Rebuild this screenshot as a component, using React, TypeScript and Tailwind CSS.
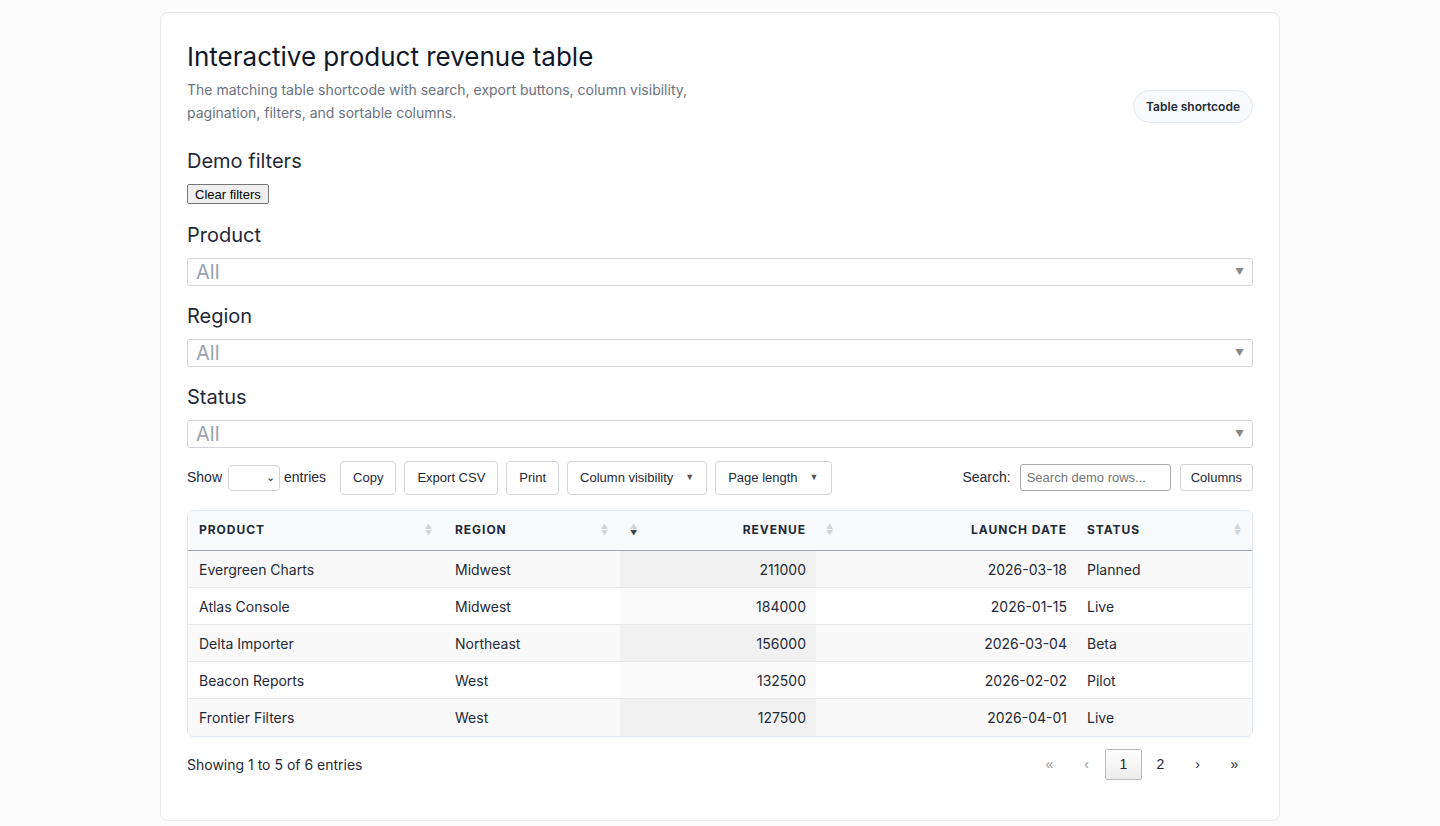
import React from "react";

const rows = [
  ["Evergreen Charts", "Midwest", "211000", "2026-03-18", "Planned"],
  ["Atlas Console", "Midwest", "184000", "2026-01-15", "Live"],
  ["Delta Importer", "Northeast", "156000", "2026-03-04", "Beta"],
  ["Beacon Reports", "West", "132500", "2026-02-02", "Pilot"],
  ["Frontier Filters", "West", "127500", "2026-04-01", "Live"],
];

const Sort = ({ active }: { active?: boolean }) => (
  <span className="flex flex-col text-[7px] leading-[7px]">
    <span className="text-[#d0d4da]">▲</span>
    <span className={active ? "text-[#3a4250]" : "text-[#d0d4da]"}>▼</span>
  </span>
);

const Filter = ({ label }: { label: string }) => (
  <div>
    <div className="text-[20px] text-[#1f2937] mt-[17px] mb-[10px] leading-[26px]">{label}</div>
    <div className="h-[28px] border border-[#d1d5db] rounded-[3px] flex items-center justify-between px-2">
      <span className="text-[20px] text-[#9ca3af]">All</span>
      <span className="text-[9px] text-[#888]">▼</span>
    </div>
  </div>
);

const Btn = ({ children }: { children: React.ReactNode }) => (
  <button className="h-[34px] px-3 border border-[#d1d5db] rounded-[4px] bg-white text-[13px] text-[#1f2937] flex items-center gap-3" style={{ fontFamily: "'Liberation Sans', sans-serif" }}>
    {children}
  </button>
);

export default function App() {
  return (
    <div className="min-h-screen bg-[#fcfcfd] pt-3 pb-3" style={{ fontFamily: "Inter, 'Liberation Sans', sans-serif" }}>
      <div className="w-[1120px] mx-auto bg-white border border-[#e5e7eb] rounded-[8px] px-[26px] pt-[28px] pb-[40px] text-[#1f2937]">
        <div className="flex items-start justify-between">
          <div>
            <h1 className="text-[26px] leading-[32px] text-[#111827]">Interactive product revenue table</h1>
            <p className="text-[14px] leading-[23px] text-[#6b7280] mt-[5px] w-[520px]">
              The matching table shortcode with search, export buttons, column visibility, pagination, filters, and sortable columns.
            </p>
          </div>
          <div className="mt-[49px] h-[33px] px-3 rounded-full border border-[#e2e8f0] bg-[#f8fafc] text-[12px] font-semibold flex items-center text-[#1f2937]">Table shortcode</div>
        </div>
        <div className="text-[20px] mt-[24px] leading-[26px]">Demo filters</div>
        <button className="mt-[10px] h-[20px] px-[7px] border border-[#767676] rounded-[2px] bg-[#efefef] text-[13px] text-black leading-none" style={{ fontFamily: "'Liberation Sans', sans-serif" }}>Clear filters</button>
        <Filter label="Product" />
        <Filter label="Region" />
        <Filter label="Status" />
        <div className="flex items-center justify-between mt-[13px] text-[14px]" style={{ fontFamily: "'Liberation Sans', sans-serif" }}>
          <div className="flex items-center gap-[8px]">
            <span>Show</span>
            <span className="-ml-[2px] h-[26px] w-[52px] border border-[#d1d5db] rounded-[4px] flex items-center justify-end pr-1 text-[11px]">⌄</span>
            <span className="-ml-[4px] mr-[6px]">entries</span>
            <Btn>Copy</Btn>
            <Btn>Export CSV</Btn>
            <Btn>Print</Btn>
            <Btn>Column visibility <span className="text-[9px] text-[#555]">▼</span></Btn>
            <Btn>Page length <span className="text-[9px] text-[#555]">▼</span></Btn>
          </div>
          <div className="flex items-center gap-[9px]">
            <span>Search:</span>
            <div className="h-[27px] w-[151px] border border-[#aaa] rounded-[3px] px-[6px] flex items-center text-[13px] text-[#757575]">Search demo rows...</div>
            <button className="h-[27px] px-[10px] border border-[#d1d5db] rounded-[3px] text-[13px]">Columns</button>
          </div>
        </div>
        <div className="mt-[15px] border border-[#e2e8f0] rounded-[6px] overflow-hidden">
          <table className="w-full text-[14px] border-collapse">
            <thead>
              <tr className="bg-[#f8fafc] h-[40px] border-b border-[#9aa3af] text-[12px] font-semibold tracking-[0.08em] text-[#1f2937]">
                <th className="w-[256px] text-left px-[11px]"><div className="flex justify-between items-center">PRODUCT<Sort /></div></th>
                <th className="w-[176px] text-left px-[11px]"><div className="flex justify-between items-center">REGION<Sort /></div></th>
                <th className="w-[196px] px-[10px]"><div className="flex justify-between items-center"><Sort active />REVENUE</div></th>
                <th className="w-[261px] px-[10px]"><div className="flex justify-between items-center"><Sort />LAUNCH DATE</div></th>
                <th className="text-left px-[10px]"><div className="flex justify-between items-center">STATUS<Sort /></div></th>
              </tr>
            </thead>
            <tbody>
              {rows.map((r, i) => (
                <tr key={r[0]} className={`h-[37px] ${i > 0 ? "border-t border-[#e5e7eb]" : ""} ${i % 2 === 0 ? "bg-[#f9f9f9]" : "bg-white"}`}>
                  <td className="px-[11px]">{r[0]}</td>
                  <td className="px-[11px]">{r[1]}</td>
                  <td className={`px-[10px] text-right ${i % 2 === 0 ? "bg-[#f1f1f1]" : "bg-[#fafafa]"}`}>{r[2]}</td>
                  <td className="px-[10px] text-right">{r[3]}</td>
                  <td className="px-[10px]">{r[4]}</td>
                </tr>
              ))}
            </tbody>
          </table>
        </div>
        <div className="flex items-center justify-between mt-[12px] text-[14px]">
          <span>Showing 1 to 5 of 6 entries</span>
          <div className="flex items-center text-[14px]" style={{ fontFamily: "'Liberation Sans', sans-serif" }}>
            <span className="w-[37px] text-center text-[#999]">«</span>
            <span className="w-[37px] text-center text-[#999]">‹</span>
            <span className="w-[37px] h-[31px] flex items-center justify-center border border-[#bbb] rounded-[2px] bg-gradient-to-b from-white to-[#ececec]">1</span>
            <span className="w-[37px] text-center">2</span>
            <span className="w-[37px] text-center">›</span>
            <span className="w-[37px] text-center">»</span>
          </div>
        </div>
      </div>
    </div>
  );
}
